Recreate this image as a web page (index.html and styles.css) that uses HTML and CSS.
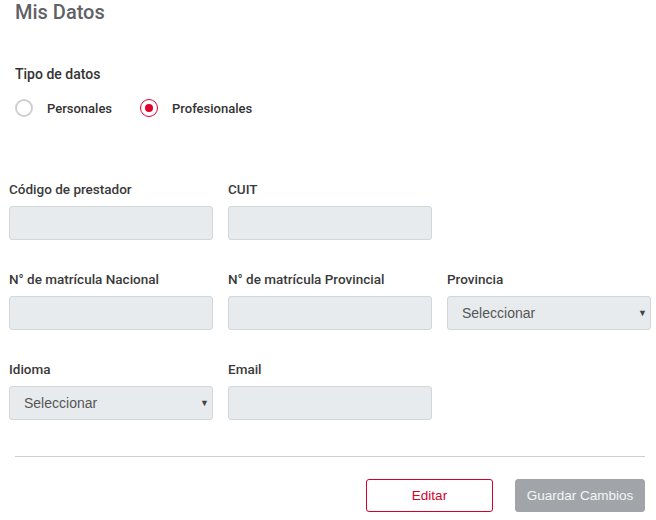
FILE: index.html
```html
<!DOCTYPE html>
<html lang="es">
<head>
<meta charset="utf-8">
<link rel="stylesheet" href="styles.css">
</head>
<body>
<div class="page">
  <h1 class="title">Mis Datos</h1>
  <div class="tipo">
    <div class="tipo-label">Tipo de datos</div>
    <div class="radios">
      <label class="radio"><span class="circle"></span><span class="rtext">Personales</span></label>
      <label class="radio"><span class="circle checked"></span><span class="rtext">Profesionales</span></label>
    </div>
  </div>
  <div class="grid">
    <div class="field"><div class="flabel">Código de prestador</div><div class="input"></div></div>
    <div class="field"><div class="flabel">CUIT</div><div class="input"></div></div>
    <div class="field empty"></div>
    <div class="field"><div class="flabel">N° de matrícula Nacional</div><div class="input"></div></div>
    <div class="field"><div class="flabel">N° de matrícula Provincial</div><div class="input"></div></div>
    <div class="field"><div class="flabel">Provincia</div><div class="input select"><span>Seleccionar</span><span class="arrow">▼</span></div></div>
    <div class="field"><div class="flabel">Idioma</div><div class="input select"><span>Seleccionar</span><span class="arrow">▼</span></div></div>
    <div class="field"><div class="flabel">Email</div><div class="input"></div></div>
  </div>
  <div class="divider"></div>
  <div class="actions">
    <button class="btn btn-edit">Editar</button>
    <button class="btn btn-save">Guardar Cambios</button>
  </div>
</div>
</body>
</html>
```
FILE: styles.css
```css
* { box-sizing: border-box; }
body { margin: 0; background: #fff; font-family: Roboto, "Liberation Sans", sans-serif; }
.page { width: 656px; height: 520px; padding: 0 5px 0 9px; overflow: hidden; }
.title { margin: 0; padding: 0 0 0 6px; font-size: 20px; font-weight: 500; color: #5f6166; line-height: 24px; }
.tipo { padding-left: 6px; margin-top: 40px; }
.tipo-label { font-size: 14px; font-weight: 500; color: #333; line-height: 20px; }
.radios { display: flex; gap: 28px; margin-top: 15px; }
.radio { display: flex; align-items: center; gap: 14px; font-size: 13px; font-weight: 500; color: #333; }
.circle { width: 18px; height: 18px; border: 2px solid #cfcfcf; border-radius: 50%; display: inline-flex; align-items: center; justify-content: center; }
.circle.checked { border: 1.5px solid #e1002d; }
.circle.checked::after { content: ""; width: 8px; height: 8px; border-radius: 50%; background: #e1002d; }
.grid { display: grid; grid-template-columns: repeat(3, 204px); column-gap: 15px; row-gap: 29px; margin-top: 62px; }
.flabel { font-size: 13.5px; font-weight: 500; color: #3a3a3a; line-height: 20px; height: 20px; margin-bottom: 7px; }
.input { height: 34px; background: #e8ebee; border: 1px solid #d3d6da; border-radius: 3px; }
.select { display: flex; align-items: center; justify-content: space-between; padding: 0 3px 0 14px; font-family: "Liberation Sans", Arial, sans-serif; font-size: 14px; color: #555; }
.arrow { font-size: 9px; color: #444; }
.divider { height: 1px; background: #d0d0d0; margin: 36px 6px 0 6px; }
.actions { display: flex; justify-content: flex-end; gap: 22px; margin-top: 22px; padding-right: 6px; }
.btn { height: 33px; border-radius: 3px; font-family: "Liberation Sans", Arial, sans-serif; font-size: 13.5px; cursor: pointer; }
.btn-edit { width: 127px; background: #fff; border: 1px solid #d6002b; color: #d6002b; }
.btn-save { width: 130px; background: #a1a5aa; border: 1px solid #a1a5aa; color: #f4f5f6; }
```
